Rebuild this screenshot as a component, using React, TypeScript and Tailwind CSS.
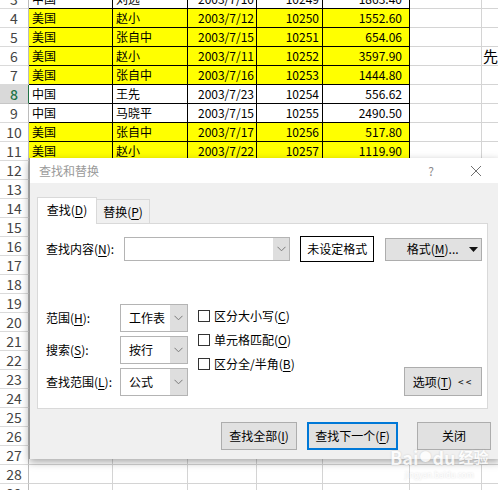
import React from 'react';

type Row = { n: number; a?: string; b?: string; c?: string; d?: string; e?: string; yellow?: boolean; data?: boolean };

const dataRows: Row[] = [
  { n: 3, a: '中国', b: '刘远', c: '2003/7/10', d: '10249', e: '1863.40' },
  { n: 4, a: '美国', b: '赵小', c: '2003/7/12', d: '10250', e: '1552.60', yellow: true },
  { n: 5, a: '美国', b: '张自中', c: '2003/7/15', d: '10251', e: '654.06', yellow: true },
  { n: 6, a: '美国', b: '赵小', c: '2003/7/11', d: '10252', e: '3597.90', yellow: true },
  { n: 7, a: '美国', b: '张自中', c: '2003/7/16', d: '10253', e: '1444.80', yellow: true },
  { n: 8, a: '中国', b: '王先', c: '2003/7/23', d: '10254', e: '556.62' },
  { n: 9, a: '中国', b: '马晓平', c: '2003/7/15', d: '10255', e: '2490.50' },
  { n: 10, a: '美国', b: '张自中', c: '2003/7/17', d: '10256', e: '517.80', yellow: true },
  { n: 11, a: '美国', b: '赵小', c: '2003/7/22', d: '10257', e: '1119.90', yellow: true },
];

const rows: Row[] = [
  ...dataRows.map(r => ({ ...r, data: true })),
  ...Array.from({ length: 18 }, (_, i) => ({ n: 12 + i })),
];

function Chevron() {
  return (
    <svg width="9" height="6" viewBox="0 0 9 6">
      <path d="M0.5 0.8 L4.5 4.8 L8.5 0.8" fill="none" stroke="#7a7a7a" strokeWidth="1" />
    </svg>
  );
}

function U({ children }: { children: React.ReactNode }) {
  return <span className="underline underline-offset-2">{children}</span>;
}

function Select({ value }: { value: string }) {
  return (
    <div className="flex h-[28px] w-[68px] border border-[#b4b4b4] bg-white">
      <div className="flex flex-1 items-center pl-[8px] text-[12px] text-black">{value}</div>
      <div className="flex w-[17px] items-center justify-center bg-[#dedede]">
        <Chevron />
      </div>
    </div>
  );
}

function Check({ children }: { children: React.ReactNode }) {
  return (
    <div className="flex h-[24px] items-center">
      <div className="h-[12px] w-[12px] border border-[#333] bg-white" />
      <span className="ml-[4px] text-[12px] text-black">{children}</span>
    </div>
  );
}

export default function App() {
  return (
    <div className="relative h-[490px] w-[498px] overflow-hidden bg-white font-['Noto_Sans_CJK_SC',sans-serif]">
      {/* Sheet */}
      <div className="-mt-[10px]">
        {rows.map(r => {
          const line = r.data ? 'border-black' : 'border-[#d4d4d4]';
          const fill = r.yellow ? 'bg-[#ffff00]' : 'bg-white';
          const active = r.n === 8;
          return (
            <div key={r.n} className="grid h-[19px] grid-cols-[29px_84px_75px_69px_66px_87px_72px_1fr] text-[12px] leading-[18px] text-black">
              <div
                className={`flex items-center justify-center border-b border-r text-[14px] ${
                  active ? 'border-b-[#c6c6c6] border-r-[#217346] bg-[#d9d9d9] font-medium text-[#217346]' : 'border-b-[#dadada] border-r-[#bcbcbc] text-[#444]'
                }`}
              >
                {r.n}
              </div>
              <div className={`border-b border-r pl-[3px] ${line} ${fill}`}>{r.a}</div>
              <div className={`border-b border-r pl-[3px] ${line} ${fill}`}>{r.b}</div>
              <div className={`border-b border-r pr-[2px] text-right ${line} ${fill}`}>{r.c}</div>
              <div className={`border-b border-r pr-[3px] text-right ${line} ${fill}`}>{r.d}</div>
              <div className={`border-b border-r pr-[7px] text-right ${line} ${fill}`}>{r.e}</div>
              <div className="border-b border-r border-[#d4d4d4]" />
              <div className="overflow-visible whitespace-nowrap border-b border-[#d4d4d4] pl-[1px] text-[15px] leading-[18px]">
                {r.n === 6 ? '先' : ''}
              </div>
            </div>
          );
        })}
      </div>

      {/* Find and replace dialog */}
      <div className="absolute left-[29px] top-[158px] w-[471px] border-l border-[#9a9a9a] bg-[#f0f0f0] shadow-[0_3px_8px_rgba(0,0,0,0.35)]">
        <div className="flex h-[25px] items-center bg-white pl-[9px] text-[12px] text-[#9a9a9a]">
          <span>查找和替换</span>
          <div className="ml-auto flex items-center gap-[33px] pr-[18px]">
            <span className="w-[12px] text-center text-[12px] text-[#8a8a8a]">?</span>
            <svg width="12" height="12" viewBox="0 0 12 12">
              <path d="M1 1 L11 11 M11 1 L1 11" stroke="#707070" strokeWidth="1" />
            </svg>
          </div>
        </div>

        <div className="pb-[9px] pl-[7px] pr-[9px] pt-[14px]">
          {/* Tabs */}
          <div className="flex h-[26px] items-end">
            <div className="relative z-10 -mb-px flex h-[27px] w-[60px] items-center justify-center border border-b-0 border-[#d9d9d9] bg-white pb-[2px] text-[12px] text-black">
              查找(<U>D</U>)
            </div>
            <div className="flex h-[24px] w-[53px] items-center justify-center border border-b-0 border-l-0 border-[#d9d9d9] bg-[#f0f0f0] text-[12px] text-black">
              替换(<U>P</U>)
            </div>
          </div>

          {/* Panel */}
          <div className="mr-[3px] h-[186px] border border-[#d9d9d9] bg-white pl-[8px] pr-[5px] pt-[12px]">
            <div className="flex h-[26px] items-center">
              <div className="w-[78px] text-[12px] text-black">
                查找内容(<U>N</U>):
              </div>
              <div className="flex h-[24px] w-[167px] border border-[#b4b4b4] bg-white">
                <div className="flex-1" />
                <div className="flex w-[16px] items-center justify-center bg-[#dedede]">
                  <Chevron />
                </div>
              </div>
              <div className="ml-[10px] flex h-[26px] w-[74px] items-center justify-center border border-black bg-white text-[12px] text-black">
                未设定格式
              </div>
              <div className="ml-[11px] flex h-[23px] w-[97px] items-center border border-[#adadad] bg-[#e1e1e1] text-[12px] text-black">
                <span className="flex-1 pl-[10px] text-center">
                  格式(<U>M</U>)...
                </span>
                <svg width="9" height="5" viewBox="0 0 9 5" className="mr-[3px]">
                  <path d="M0 0 L9 0 L4.5 5 Z" fill="#111" />
                </svg>
              </div>
            </div>

            <div className="mt-[42px] flex items-start">
              <div className="flex flex-col gap-[4px]">
                <div className="flex items-center">
                  <div className="w-[74px] text-[12px] text-black">
                    范围(<U>H</U>):
                  </div>
                  <Select value="工作表" />
                </div>
                <div className="flex items-center">
                  <div className="w-[74px] text-[12px] text-black">
                    搜索(<U>S</U>):
                  </div>
                  <Select value="按行" />
                </div>
                <div className="flex items-center">
                  <div className="w-[74px] text-[12px] text-black">
                    查找范围(<U>L</U>):
                  </div>
                  <Select value="公式" />
                </div>
              </div>

              <div className="ml-[10px] flex flex-col">
                <Check>
                  区分大小写(<U>C</U>)
                </Check>
                <Check>
                  单元格匹配(<U>O</U>)
                </Check>
                <Check>
                  区分全/半角(<U>B</U>)
                </Check>
              </div>

              <div className="ml-auto flex h-[29px] w-[78px] items-center justify-center self-end border border-[#adadad] bg-[#e1e1e1] text-[12px] text-black">
                选项(<U>T</U>)<span className="ml-[6px] text-[10px] tracking-[2px]">&lt;&lt;</span>
              </div>
            </div>
          </div>

          {/* Buttons */}
          <div className="mt-[13px] flex justify-end">
            <div className="flex h-[28px] w-[76px] items-center justify-center border border-[#adadad] bg-[#e1e1e1] text-[12px] text-black">
              查找全部(<U>I</U>)
            </div>
            <div className="ml-[10px] flex h-[28px] w-[91px] items-center justify-center border-2 border-[#0078d7] bg-[#e1e1e1] text-[12px] text-black">
              查找下一个(<U>F</U>)
            </div>
            <div className="ml-[19px] flex h-[28px] w-[74px] items-center justify-center border border-[#adadad] bg-[#e1e1e1] text-[12px] text-black">
              关闭
            </div>
          </div>
        </div>
      </div>

      {/* Watermark */}
      <div className="pointer-events-none absolute left-[390px] top-[447px] flex flex-col items-center gap-[3px] text-white opacity-80 [text-shadow:0_0_2px_rgba(0,0,0,0.2)]">
        <div className="flex items-center text-[18px] font-bold leading-[20px]">
          <span>Bai</span>
          <span className="mx-[1px] text-[12px]">●</span>
          <span>du</span>
          <span className="ml-[3px] text-[15px]">经验</span>
        </div>
        <div className="text-[8px] leading-[9px]">jingyan.baidu.com</div>
      </div>
    </div>
  );
}
